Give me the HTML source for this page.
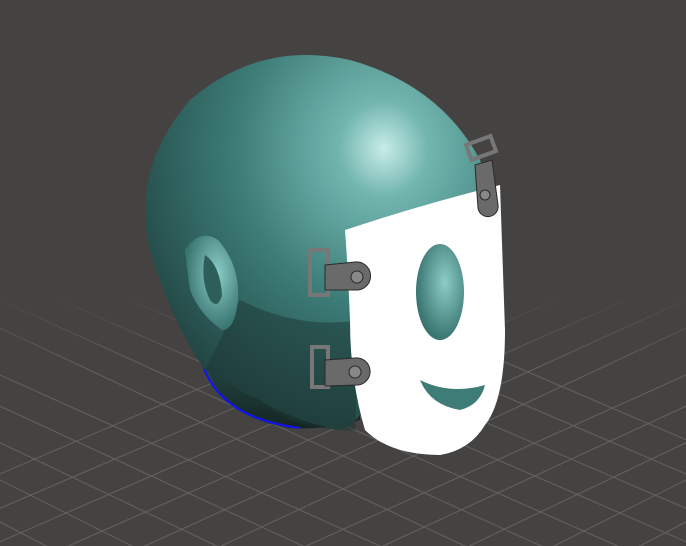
<!DOCTYPE html>
<html><head><style>html,body{margin:0;padding:0;background:#444342;overflow:hidden;width:686px;height:546px}svg{display:block}</style></head>
<body>
<svg width="686" height="546" viewBox="0 0 686 546" xmlns="http://www.w3.org/2000/svg">
<defs>
<radialGradient id="hg" cx="0.68" cy="0.25" r="0.85">
<stop offset="0" stop-color="#c8ece8"/><stop offset="0.15" stop-color="#72b5af"/><stop offset="0.5" stop-color="#3c7c77"/><stop offset="1" stop-color="#1d3a38"/>
</radialGradient>
<linearGradient id="ng" x1="0" y1="0" x2="0" y2="1"><stop offset="0" stop-color="#2b5350"/><stop offset="1" stop-color="#142624"/></linearGradient>
<radialGradient id="eg" cx="0.6" cy="0.4" r="0.6"><stop offset="0" stop-color="#8ccdc7"/><stop offset="1" stop-color="#3a7570"/></radialGradient>
<linearGradient id="fade" x1="0" y1="0" x2="0" y2="1"><stop offset="0" stop-color="#fff" stop-opacity="0"/><stop offset="0.3" stop-color="#fff" stop-opacity="1"/></linearGradient>
<mask id="fm"><rect x="0" y="290" width="686" height="256" fill="url(#fade)"/></mask>
</defs>
<rect width="686" height="546" fill="#444342"/>
<g stroke="#6f6e6b" stroke-width="1" mask="url(#fm)" opacity="0.75">
<line x1="-100" y1="330" x2="500" y2="600"/><line x1="-100" y1="360" x2="420" y2="600"/><line x1="-100" y1="395" x2="330" y2="600"/><line x1="-100" y1="430" x2="240" y2="600"/><line x1="-100" y1="470" x2="150" y2="600"/>
<line x1="-60" y1="300" x2="580" y2="600"/><line x1="0" y1="300" x2="660" y2="600"/><line x1="60" y1="300" x2="740" y2="600"/><line x1="130" y1="300" x2="820" y2="600"/><line x1="200" y1="300" x2="900" y2="600"/><line x1="280" y1="300" x2="980" y2="600"/><line x1="360" y1="300" x2="1060" y2="600"/>
<line x1="786" y1="330" x2="186" y2="600"/><line x1="786" y1="360" x2="266" y2="600"/><line x1="786" y1="395" x2="356" y2="600"/><line x1="786" y1="430" x2="446" y2="600"/><line x1="786" y1="470" x2="536" y2="600"/>
<line x1="746" y1="300" x2="106" y2="600"/><line x1="686" y1="300" x2="26" y2="600"/><line x1="626" y1="300" x2="-54" y2="600"/><line x1="556" y1="300" x2="-134" y2="600"/><line x1="486" y1="300" x2="-214" y2="600"/><line x1="406" y1="300" x2="-294" y2="600"/>
</g>
<path d="M205 360 Q215 415 290 428 Q330 430 360 420 L360 340 L205 330 Z" fill="url(#ng)"/>
<path d="M203 365 Q220 418 300 428" stroke="#1010ff" stroke-width="2" fill="none"/>
<path d="M205 370 Q170 320 150 250 Q130 170 190 100 Q260 40 350 60 Q440 85 480 160 Q500 210 495 260 L380 360 Q370 420 340 430 Q290 420 260 400 Q225 385 205 370 Z" fill="url(#hg)"/>
<path d="M205 370 Q240 395 290 420 Q330 432 355 430 L360 320 Q300 330 240 300 Z" fill="#1b3533" opacity="0.5"/>
<path d="M185 250 Q200 228 218 240 Q240 265 238 300 Q235 330 222 330 Q200 315 190 290 Z" fill="url(#eg)"/>
<path d="M205 255 Q220 265 222 295 Q218 310 210 300 Q200 280 205 255 Z" fill="#2e5e5a"/>
<path d="M345 230 Q420 205 500 185 L505 330 Q505 400 485 425 Q470 450 440 455 Q390 455 365 430 Q350 380 350 320 Q348 270 345 230 Z" fill="#ffffff"/>
<ellipse cx="440" cy="292" rx="24" ry="48" fill="url(#eg)"/>
<path d="M420 380 Q450 395 485 385 Q480 405 460 410 Q430 405 420 380 Z" fill="#3e7c77"/>
<g fill="#6a6a6a" stroke="#2a2a2a" stroke-width="1">
<rect x="310" y="250" width="18" height="45" fill="none" stroke="#777" stroke-width="4"/>
<path d="M325 265 L355 262 A13 13 0 0 1 358 290 L325 290 Z"/>
<circle cx="357" cy="277" r="6" fill="#888"/>
<rect x="312" y="347" width="16" height="40" fill="none" stroke="#777" stroke-width="4"/>
<path d="M325 360 L355 358 A13 13 0 0 1 358 385 L325 386 Z"/>
<circle cx="355" cy="372" r="6" fill="#888"/>
<rect x="468" y="140" width="26" height="16" fill="none" stroke="#777" stroke-width="4" transform="rotate(-20 481 148)"/>
<path d="M475 165 L492 160 L498 205 A10 10 0 0 1 478 208 Z"/>
<circle cx="485" cy="195" r="5" fill="#888"/>
</g>
</svg>
</body></html>
